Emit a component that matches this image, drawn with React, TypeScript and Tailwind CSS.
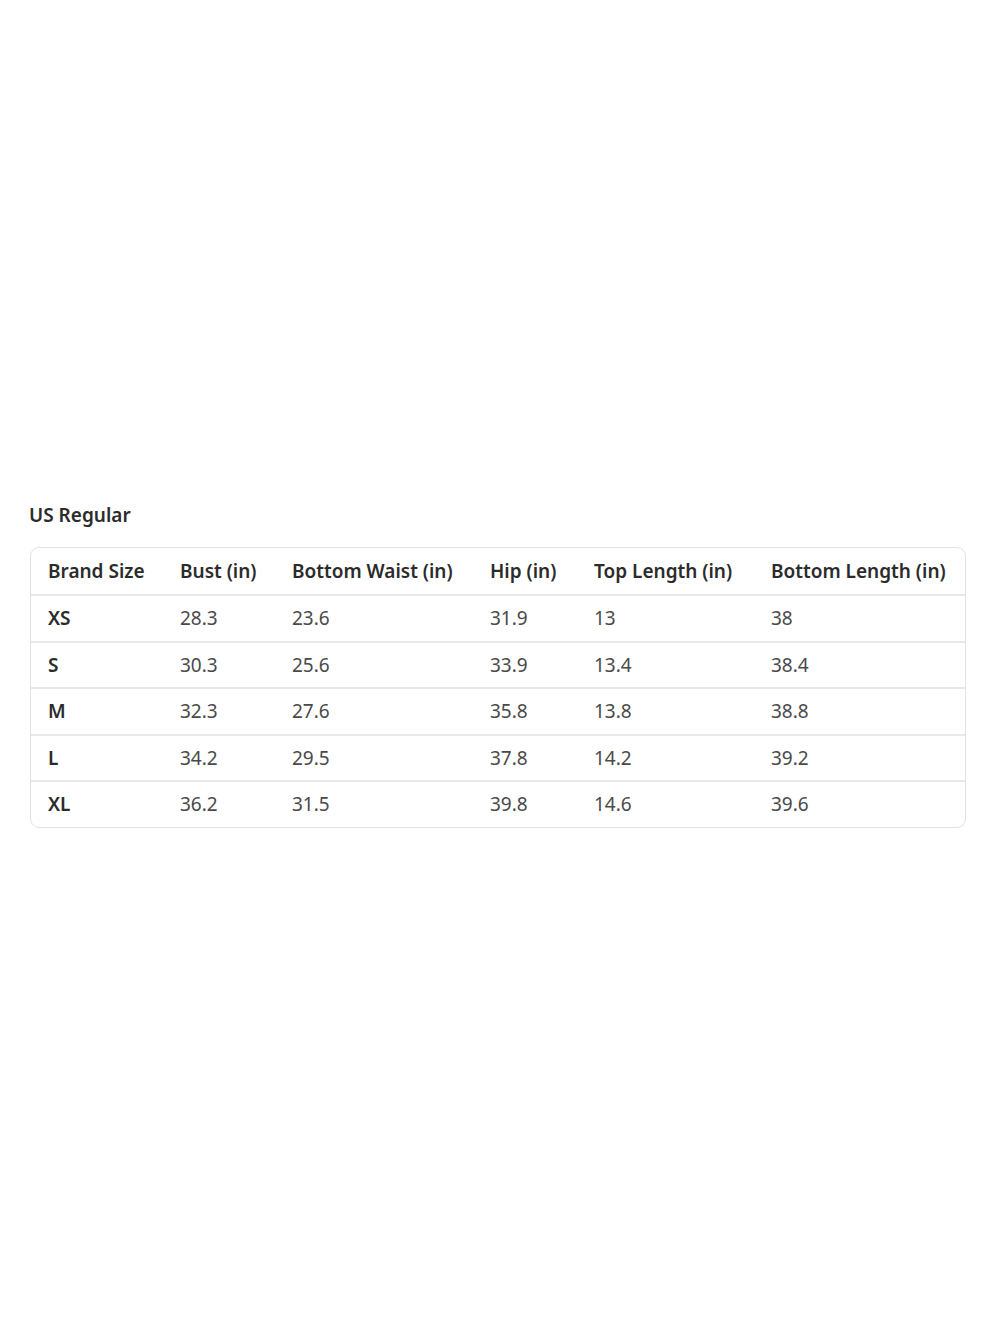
const headers = ["Brand Size", "Bust (in)", "Bottom Waist (in)", "Hip (in)", "Top Length (in)", "Bottom Length (in)"]

const rows = [
  ["XS", "28.3", "23.6", "31.9", "13", "38"],
  ["S", "30.3", "25.6", "33.9", "13.4", "38.4"],
  ["M", "32.3", "27.6", "35.8", "13.8", "38.8"],
  ["L", "34.2", "29.5", "37.8", "14.2", "39.2"],
  ["XL", "36.2", "31.5", "39.8", "14.6", "39.6"],
]

const cols = "grid grid-cols-[132px_112px_198px_104px_177px_1fr] items-center"

export default function App() {
  return (
    <div className="min-h-[1333px] w-[1000px] bg-white pt-[502px] pl-[29px] pr-[34px]" style={{ fontFamily: '"Noto Sans", "Open Sans", sans-serif' }}>
      <h2 className="text-[19px] font-semibold leading-[27px] text-[#2b2b2b]">US Regular</h2>
      <div className="mt-[18px] ml-[1px] overflow-hidden rounded-[9px] border border-[#e3e3e3]">
        <div className={`${cols} h-[46px]`}>
          {headers.map((h) => (
            <div key={h} className="pl-[17px] text-[19px] font-semibold text-[#2b2b2b]">{h}</div>
          ))}
        </div>
        {rows.map((r) => (
          <div key={r[0]} className={`${cols} h-[46.6px] border-t-2 border-[#e8e8e8]`}>
            {r.map((c, i) => (
              <div key={i} className={i === 0 ? "pl-[17px] text-[19px] font-semibold text-[#2b2b2b]" : "pl-[17px] text-[19px] text-[#4a4a4a]"}>{c}</div>
            ))}
          </div>
        ))}
      </div>
    </div>
  )
}
